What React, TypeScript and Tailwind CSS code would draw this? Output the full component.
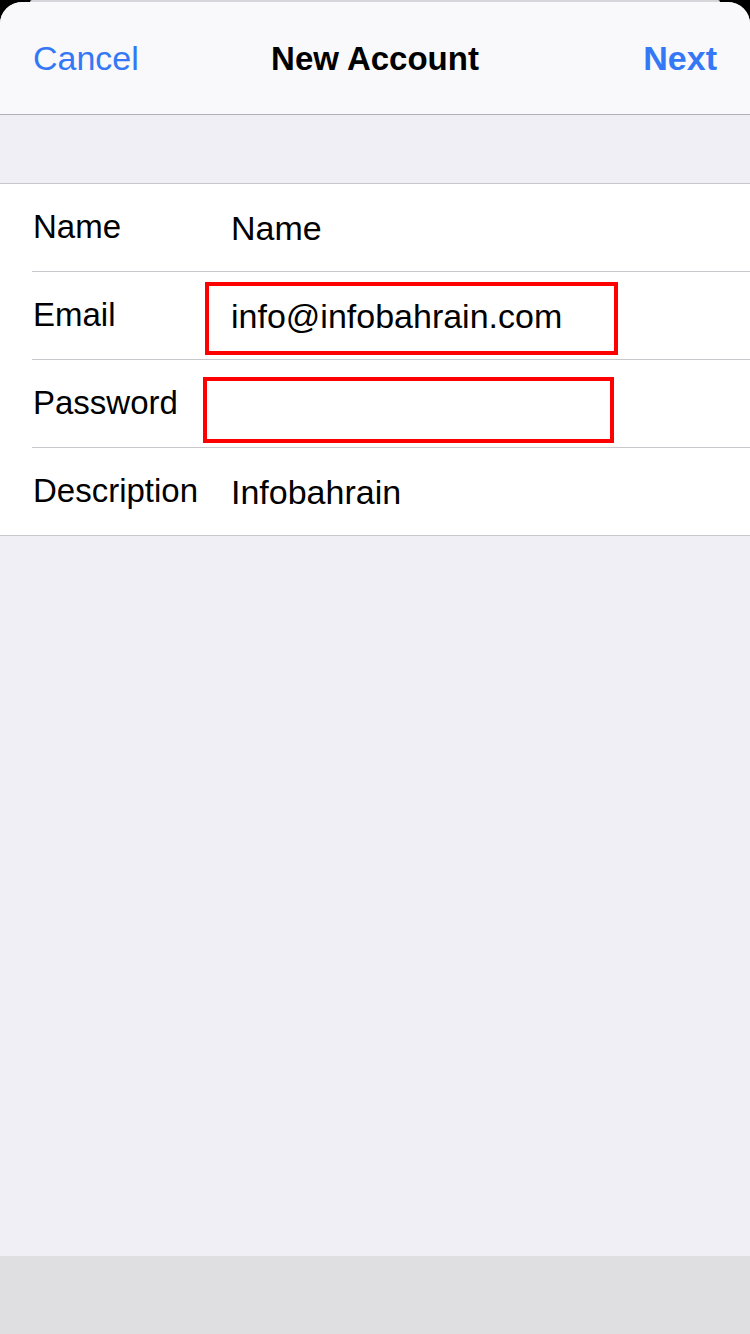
import React from "react";

const rows = [
  { label: "Name", value: "Name" },
  { label: "Email", value: "info@infobahrain.com" },
  { label: "Password", value: "" },
  { label: "Description", value: "Infobahrain" },
];

export default function App() {
  return (
    <div
      className="w-[750px] h-[1334px] bg-black flex flex-col overflow-hidden"
      style={{ fontFamily: '"Liberation Sans", Arial, sans-serif' }}
    >
      <div className="h-[2px] mx-[30px] bg-[#d6d6da] rounded-t-[10px]" />
      <div className="relative flex-1 flex flex-col bg-[#f0eff5] rounded-t-[22px] overflow-hidden">
        {/* Nav bar */}
        <div className="h-[113px] shrink-0 bg-[#f9f9fb] border-b border-[#b2b2b6] flex items-center justify-between px-[33px] relative">
          <span className="text-[34px] text-[#3478f6] leading-none">Cancel</span>
          <span className="absolute left-0 right-0 text-center text-[33px] font-bold text-black leading-none pointer-events-none">
            New Account
          </span>
          <span className="text-[34px] font-bold text-[#3478f6] leading-none">Next</span>
        </div>

        <div className="h-[68px] shrink-0" />

        {/* Form section */}
        <div className="bg-white border-y border-[#c8c7cc]">
          {rows.map((r, i) => (
            <div key={r.label} className="pl-[32px]">
              <div
                className={`flex items-center ${
                  i < rows.length - 1 ? "border-b border-[#c8c7cc] h-[88px]" : "h-[87px]"
                }`}
              >
                <span className="w-[199px] pl-px pb-[3px] text-[33px] text-black leading-none">{r.label}</span>
                <span className="pt-[1px] text-[34px] text-black leading-none">{r.value}</span>
              </div>
            </div>
          ))}
        </div>

        {/* Red annotation boxes */}
        <div className="absolute left-[205px] top-[280px] w-[413px] h-[73px] border-[4px] border-[#ff0000]" />
        <div className="absolute left-[203px] top-[375px] w-[411px] h-[66px] border-[4px] border-[#ff0000]" />
      </div>
      <div className="h-[78px] shrink-0 bg-[#dfdfe1]" />
    </div>
  );
}
